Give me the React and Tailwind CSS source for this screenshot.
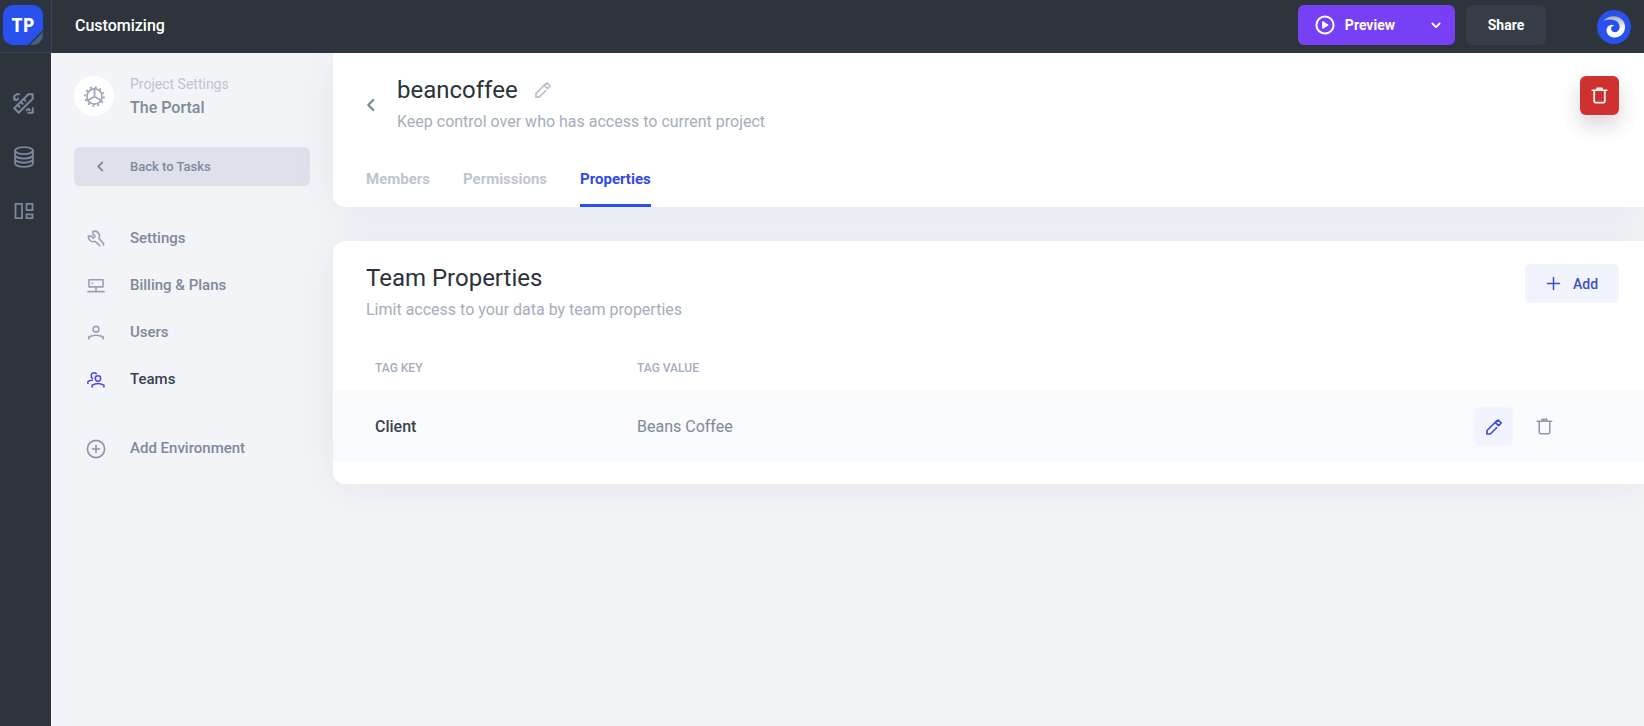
const stroke = { fill: 'none', stroke: 'currentColor', strokeLinejoin: 'round', strokeLinecap: 'round' };

function Icon({ size = 18, width = 1.5, box = 20, className = '', children }) {
  return (
    <svg width={size} height={size} viewBox={`0 0 ${box} ${box}`} strokeWidth={width} className={`shrink-0 ${className}`} aria-hidden="true" {...stroke}>
      {children}
    </svg>
  );
}

const Pencil = (props) => (
  <Icon width={1.5} {...props}>
    <path d="M2.2 17.8v-3.9L12.8 3.3M2.2 17.8h3.7l7-7" />
    <path d="M14.6 2.2 18 5.6l-2.9 2.9-3.5-3.4z" />
  </Icon>
);

const Trash = (props) => (
  <Icon width={1.8} {...props}>
    <path d="M1.5 3.8h17M7.2 3.4V1.6h5.6v1.8M3.8 4.2v12.6c0 1 .6 1.6 1.6 1.6h9.200c1 0 1.600-.6 1.600-1.600V4.200" />
  </Icon>
);

const ChevronLeft = (props) => (
  <Icon width={2} {...props}><path d="M12.500 4.500 7 10l5.500 5.500" /></Icon>
);

const Tools = () => (
  <Icon size={21} width={1.900}>
    <path d="m1.200 14.600 4.200 4.200L18.800 5.400V1.200h-4.200z" />
    <path d="m4.800 11.600 1.500 1.500M7.600 8.800l1.500 1.500M10.400 6l1.500 1.500" />
    <path d="M1.200 6.400V3.200l2.200-2h2.400M1.200 5l2 2 1.600-1.600M14.600 18.800h4.200v-4.200M13 16.400l1.600-1.400 1.200 1.200" />
  </Icon>
);

const Database = () => (
  <svg width="20" height="22" viewBox="0 0 20 22" strokeWidth="1.900" aria-hidden="true" {...stroke}>
    <ellipse cx="10" cy="4.600" rx="8.900" ry="3.500" />
    <path d="M1.100 4.600v12.800c0 2 4 3.500 8.900 3.500s8.900-1.500 8.900-3.500V4.600M1.100 9c0 2 4 3.500 8.900 3.500s8.900-1.500 8.900-3.500M1.100 13.200c0 2 4 3.500 8.900 3.500s8.900-1.500 8.900-3.500" />
  </svg>
);

const Board = () => (
  <Icon size={20} width={1.800}>
    <path d="M1.500 2.800h6.500v14.400h-6.500zM12.500 2.800h6v6.400h-6zM12.500 13.400h6v3.800h-6z" strokeLinejoin="miter" />
  </Icon>
);

const Gear = () => (
  <Icon size={21} width={1.700}>
    <circle cx="10" cy="10" r="7.200" />
    <circle cx="10" cy="10" r="8.900" strokeWidth="1.900" strokeDasharray="1.900 2.760" strokeLinecap="butt" />
    <path d="M10 2.400V10M10 10l-6.600 3.800M10 10l6.600 3.800" />
  </Icon>
);

const Wrench = () => (
  <Icon width={1.800}>
    <path d="M6.700 1.600 6.500 4.400 9 6.700 7 9 4.400 6.600 1.500 6.800c-.2 3.600 2.600 6.600 6 6.200l1.500-.4 5.300 4.900" />
    <path d="M6.700 1.600c4-1.200 7.400 1.800 7.200 5.400l-.6 2.200 5.200 6.300v1.300" />
  </Icon>
);

const Billing = () => (
  <Icon width={1.800}>
    <path d="M2.200 3h15.600v8H2.200zM1 16.200h18M10 11v5.200" />
    <path d="M5.800 7h.1" strokeWidth="2" />
  </Icon>
);

const User = () => (
  <Icon width={1.800}>
    <circle cx="10" cy="5.800" r="3.200" />
    <path d="M2 16.600v-2.200c4.600-2.600 11.400-2.600 16 0v2.200" />
  </Icon>
);

const Team = () => (
  <Icon width={1.700}>
    <circle cx="12.200" cy="8.300" r="3" />
    <path d="M5.700 17.800v-2c3.800-2.300 9.300-2.300 13.100 0v2M10.300 2.900C8.600 1.200 4.400 2 4.600 5.200c0 1.300.6 2.200 1.500 2.900M1 14v-2.200c1.600-1 3.100-1.500 4.900-1.500" />
  </Icon>
);

const PlusCircle = () => (
  <Icon size={20} width={1.600}><circle cx="10" cy="10" r="8.600" /><path d="M10 6.500v7M6.500 10h7" /></Icon>
);

const navItems = [
  { label: 'Settings', icon: Wrench },
  { label: 'Billing & Plans', icon: Billing },
  { label: 'Users', icon: User },
  { label: 'Teams', icon: Team, active: true },
];

const railItems = [
  { label: 'Design', icon: Tools },
  { label: 'Data', icon: Database },
  { label: 'Layouts', icon: Board },
];

const tabs = [{ label: 'Members' }, { label: 'Permissions' }, { label: 'Properties', active: true }];

function Header() {
  return (
    <header className="relative z-10 flex h-[53px] items-center bg-[#2d343c] text-white">
      <a href="#" className="flex h-full w-[52px] items-center border-r border-b border-[#3c4553] bg-[#2c3441] pl-[3px]" aria-label="Home">
        <svg width="40" height="40" viewBox="0 0 40 40" className="mb-[2px]" aria-hidden="true">
          <path d="M10 0h20a10 10 0 0 1 10 10v15L25 40H10A10 10 0 0 1 0 30V10A10 10 0 0 1 10 0z" fill="#2951ee" />
          <path d="M40 27v3a10 10 0 0 1-10 10h-3z" fill="#476182" />
          <text x="20" y="27" textAnchor="middle" fill="#fff" fontSize="19" fontWeight="700" fontFamily="Open Sans, sans-serif">TP</text>
        </svg>
      </a>
      <h1 className="flex-1 pb-[2px] pl-[23px] text-base font-medium">Customizing</h1>
      <div className="mr-[11px] mb-[3px] flex h-10 overflow-hidden rounded-md bg-[#7740f5]">
        <button type="button" className="flex items-center gap-[10px] pl-[17px] text-sm font-bold">
          <Icon size={20} width={2}>
            <circle cx="10" cy="10" r="8.600" />
            <path d="M8 6.700 13.200 10 8 13.300z" fill="currentColor" strokeWidth="1" />
          </Icon>
          Preview
        </button>
        <button type="button" aria-label="Preview options" className="ml-[22px] flex w-[38px] items-center justify-center">
          <Icon size={12} width={3}><path d="m4 7.500 6 6 6-6" /></Icon>
        </button>
      </div>
      <button type="button" className="mr-[51px] mb-[3px] h-10 w-20 rounded-md bg-[#363d49] text-sm font-bold">Share</button>
      <button type="button" aria-label="Account" className="mr-[13px]">
        <svg width="34" height="34" viewBox="0 0 34 34" aria-hidden="true">
          <defs>
            <linearGradient id="swirl" x1="0" y1="0" x2="0" y2="1"><stop stopColor="#a9afbd" /><stop offset=".6" stopColor="#fff" /></linearGradient>
          </defs>
          <circle cx="17" cy="17" r="17" fill="#2951ee" />
          <path d="M6.500 11C10.500 5.200 21 4.200 26 10.500c4.600 6 1.500 16-7.500 17C11.500 28 7.800 21.500 10.300 17.200c1.500-2.600 4.700-3.200 7.200-1.700-3 .3-4.200 3-2.700 5.300 2 2.800 7.500 1.500 7.900-3.300C23 10.500 14.500 7.500 6.500 11z" fill="url(#swirl)" />
        </svg>
      </button>
    </header>
  );
}

function Sidebar() {
  return (
    <aside className="flex w-[282px] shrink-0 flex-col px-[23px] pt-[19px] text-[#7e899b]">
      <div className="flex items-center gap-4">
        <span className="flex size-10 items-center justify-center rounded-full bg-white text-[#a0a8ba]"><Gear /></span>
        <div>
          <p className="text-sm leading-6 text-[#bfc4d1]">Project Settings</p>
          <p className="text-base leading-6 font-medium">The Portal</p>
        </div>
      </div>
      <a href="#" className="mt-[27px] flex h-[39px] items-center rounded-md bg-[#dee1e9] text-[13px] font-medium">
        <span className="flex w-14 justify-center"><ChevronLeft size={15} width={2.500} className="mr-1" /></span>
        Back to Tasks
      </a>
      <nav className="mt-[29px] flex flex-col text-[15px] font-medium">
        {navItems.map(({ label, icon: Glyph, active }) => (
          <a key={label} href="#" className={`flex h-[47px] items-center ${active ? 'text-[#3a4252]' : ''}`}>
            <span className={`flex w-14 pl-[13px] ${active ? 'text-[#5046e5]' : 'text-[#98a1b4]'}`}><Glyph /></span>
            {label}
          </a>
        ))}
      </nav>
      <button type="button" className="mt-[22px] flex h-[47px] items-center text-[15px] font-medium">
        <span className="flex w-14 pl-3 text-[#8a94a8]"><PlusCircle /></span>
        Add Environment
      </button>
    </aside>
  );
}

function TeamHeader() {
  return (
    <section className="rounded-bl-xl bg-white pt-[23px] pr-[25px] pl-[33px] shadow-[0_4px_40px_rgba(60,70,90,0.08)]">
      <div className="flex items-start">
        <button type="button" aria-label="Back" className="mt-5 -ml-1 flex w-[35px] text-[#7e899b]"><ChevronLeft width={2.500} size={18} /></button>
        <div className="flex-1">
          <div className="flex items-center gap-4">
            <h2 className="text-2xl leading-7 text-[#2b323c]">beancoffee</h2>
            <button type="button" aria-label="Rename team" className="text-[#bfc4d1]"><Pencil size={18} width={2} /></button>
          </div>
          <p className="mt-[6px] text-base leading-6 text-[#a6adbd]">Keep control over who has access to current project</p>
        </div>
        <button type="button" aria-label="Delete team" className="flex size-[39px] items-center justify-center rounded-md bg-[#cf3030] text-white shadow-[0_10px_20px_rgba(60,40,60,0.2)]"><Trash size={17} width={2} /></button>
      </div>
      <nav className="mt-[21px] flex gap-[33px] text-[15px] font-bold">
        {tabs.map(({ label, active }) => (
          <a key={label} href="#" className={`flex h-[52px] items-center border-b-[3px] ${active ? 'border-[#2951ee] text-[#3148ea]' : 'border-transparent text-[#bfc4d1]'}`}>{label}</a>
        ))}
      </nav>
    </section>
  );
}

function TeamProperties() {
  return (
    <section className="mt-[34px] rounded-l-xl bg-white pb-[22px] shadow-[0_4px_40px_rgba(60,70,90,0.08)]">
      <div className="flex items-start justify-between pt-[23px] pr-[25px] pl-[33px]">
        <div>
          <h2 className="text-2xl leading-7 text-[#2b323c]">Team Properties</h2>
          <p className="mt-[6px] text-base leading-6 text-[#a6adbd]">Limit access to your data by team properties</p>
        </div>
        <button type="button" className="flex h-[39px] w-[94px] items-center justify-center gap-3 rounded-md bg-[#f1f4fd] text-sm font-medium text-[#3b4fc4]">
          <Icon size={15} width={2}><path d="M10 2v16M2 10h16" /></Icon>
          Add
        </button>
      </div>
      <table className="mt-[21px] w-full table-fixed text-left">
        <thead>
          <tr className="h-12 text-xs text-[#a6adbd]">
            <th scope="col" className="w-[304px] pt-[2px] pl-[42px] font-medium">TAG KEY</th>
            <th scope="col" className="pt-[2px] font-medium">TAG VALUE</th>
            <td className="w-48" />
          </tr>
        </thead>
        <tbody>
          <tr className="h-[71px] bg-[#f9fafc] text-base">
            <th scope="row" className="pl-[42px] font-medium text-[#3a4252]">Client</th>
            <td className="text-[#7e899b]">Beans Coffee</td>
            <td>
              <div className="flex pl-[22px]">
                <button type="button" aria-label="Edit property" className="flex size-[39px] items-center justify-center rounded-md bg-[#f1f4fd] text-[#3b49dc]"><Pencil size={18} width={1.800} /></button>
                <button type="button" aria-label="Delete property" className="ml-3 flex size-[39px] items-center justify-center text-[#8f98ac]"><Trash size={17} /></button>
              </div>
            </td>
          </tr>
        </tbody>
      </table>
    </section>
  );
}

export default function App() {
  return (
    <div className="flex min-h-screen flex-col bg-[#f2f4f8] font-['Roboto',sans-serif]">
      <Header />
      <div className="flex flex-1">
        <nav aria-label="Main" className="flex w-[51px] shrink-0 flex-col items-center bg-[#2d343c] pt-[34px] pr-1 text-[#7b879f]">
          {railItems.map(({ label, icon: Glyph }) => (
            <a key={label} href="#" aria-label={label} className="mb-[22px] flex size-8 items-center justify-center"><Glyph /></a>
          ))}
        </nav>
        <Sidebar />
        <main className="min-w-0 flex-1">
          <TeamHeader />
          <TeamProperties />
        </main>
      </div>
    </div>
  );
}
